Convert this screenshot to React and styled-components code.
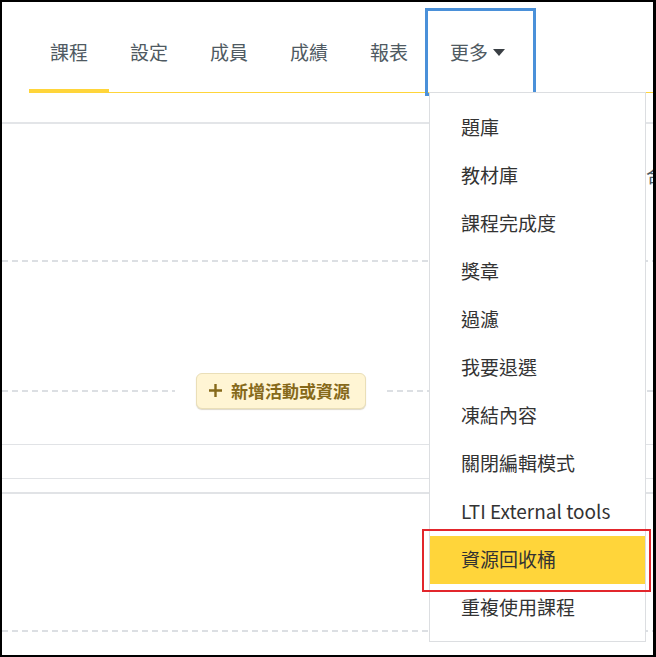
import React from 'react';
import styled, { createGlobalStyle } from 'styled-components';

const GlobalStyle = createGlobalStyle`
  * { box-sizing: border-box; }
  body {
    margin: 0;
    background: #ffffff;
    font-family: "Noto Sans CJK TC", "Noto Sans", sans-serif;
  }
`;

const Frame = styled.div`
  position: relative;
  width: 656px;
  height: 657px;
  border: solid #000;
  border-width: 2px 3px 2px 2px;
  background: #fff;
  overflow: hidden;
`;

const Header = styled.header`
  height: 122px;
  padding-top: 10px;
  border-bottom: 2px solid #e3e5e8;
`;

const Tabs = styled.nav`
  display: flex;
  margin-left: 27px;
  border-bottom: 1px solid #ffd53a;
`;

const Tab = styled.div`
  position: relative;
  display: flex;
  align-items: center;
  gap: 5px;
  height: 80px;
  padding: 0 ${(p) => (p.$more ? '27px' : '21px')} 2px 21px;
  font-size: 19px;
  line-height: 1;
  color: #4f5a62;
  box-shadow: ${(p) => (p.$active ? 'inset 0 -3px 0 #ffd53a' : 'none')};
  outline: ${(p) => (p.$focused ? '3px solid #4a90d9' : 'none')};
  outline-offset: 1px;
`;

const Caret = styled.span`
  width: 0;
  height: 0;
  border-left: 6px solid transparent;
  border-right: 6px solid transparent;
  border-top: 7px solid #3a3f44;
  margin-top: 2px;
`;

const Section = styled.section`
  display: flex;
  flex-direction: column;
  justify-content: ${(p) => (p.$end ? 'flex-end' : 'flex-start')};
  height: ${(p) => p.$h}px;
`;

const Aside = styled.div`
  align-self: flex-end;
  margin: 41px -12px 0 0;
  font-size: 19px;
  line-height: 1;
  color: #4f5a62;
`;

const Dashed = styled.div`
  height: 2px;
  background: repeating-linear-gradient(90deg, #dcdfe3 0 6px, transparent 6px 10px);
`;

const Solid = styled.div`
  height: ${(p) => p.$w || 1}px;
  background: #e1e3e6;
`;

const AddRow = styled.div`
  display: grid;
  grid-template-columns: 173px auto 1fr;
  align-items: center;
  gap: 21px;
  margin-top: 111px;
`;

const AddButton = styled.button`
  display: flex;
  align-items: center;
  gap: 9px;
  width: 170px;
  height: 36px;
  padding: 0 0 1px 12px;
  border: 1px solid #eadfb8;
  border-radius: 6px;
  background: #fff5d4;
  box-shadow: 0 1px 1px rgba(120, 100, 40, 0.25);
  color: #86691a;
  font-family: "Noto Sans CJK TC", sans-serif;
  font-size: 17px;
  font-weight: 700;
  line-height: 1;
`;

const Menu = styled.ul`
  position: absolute;
  left: 427px;
  top: 90px;
  width: 217px;
  margin: 0;
  padding: 11px 0 9px;
  list-style: none;
  background: #fff;
  border: 1px solid #dcdee1;
`;

const MenuItem = styled.li`
  position: relative;
  display: flex;
  align-items: center;
  height: 48px;
  padding: 0 0 3px 31px;
  font-size: 19px;
  line-height: 1;
  color: #333;
  background: ${(p) => (p.$selected ? '#ffd53a' : 'transparent')};

  ${(p) =>
    p.$selected &&
    `
    &::after {
      content: '';
      position: absolute;
      inset: -7px -6px -8px -8px;
      border: 2px solid #e2262c;
    }
  `}
`;

const tabs = ['課程', '設定', '成員', '成績', '報表'];
const items = [
  '題庫',
  '教材庫',
  '課程完成度',
  '獎章',
  '過濾',
  '我要退選',
  '凍結內容',
  '關閉編輯模式',
  'LTI External tools',
  '資源回收桶',
  '重複使用課程',
];

const App = () => (
  <>
    <GlobalStyle />
    <Frame>
      <Header>
        <Tabs>
          {tabs.map((t, i) => (
            <Tab key={t} $active={i === 0}>
              {t}
            </Tab>
          ))}
          <Tab $more $focused>
            更多
            <Caret />
          </Tab>
        </Tabs>
      </Header>

      <Section $h={138} $end>
        <Aside>合</Aside>
        <div style={{ flex: 1 }} />
        <Dashed />
      </Section>

      <AddRow>
        <Dashed />
        <AddButton>
          <svg width="13" height="13" viewBox="0 0 13 13">
            <path d="M6.5 0v13M0 6.5h13" stroke="currentColor" strokeWidth="2.4" />
          </svg>
          新增活動或資源
        </AddButton>
        <Dashed />
      </AddRow>

      <Section $h={35} />
      <Solid />
      <Section $h={33} />
      <Solid />
      <Section $h={13} />
      <Solid $w={2} />
      <Section $h={136} />
      <Dashed />

      <Menu>
        {items.map((it) => (
          <MenuItem key={it} $selected={it === '資源回收桶'}>
            {it}
          </MenuItem>
        ))}
      </Menu>
    </Frame>
  </>
);

export default App;
